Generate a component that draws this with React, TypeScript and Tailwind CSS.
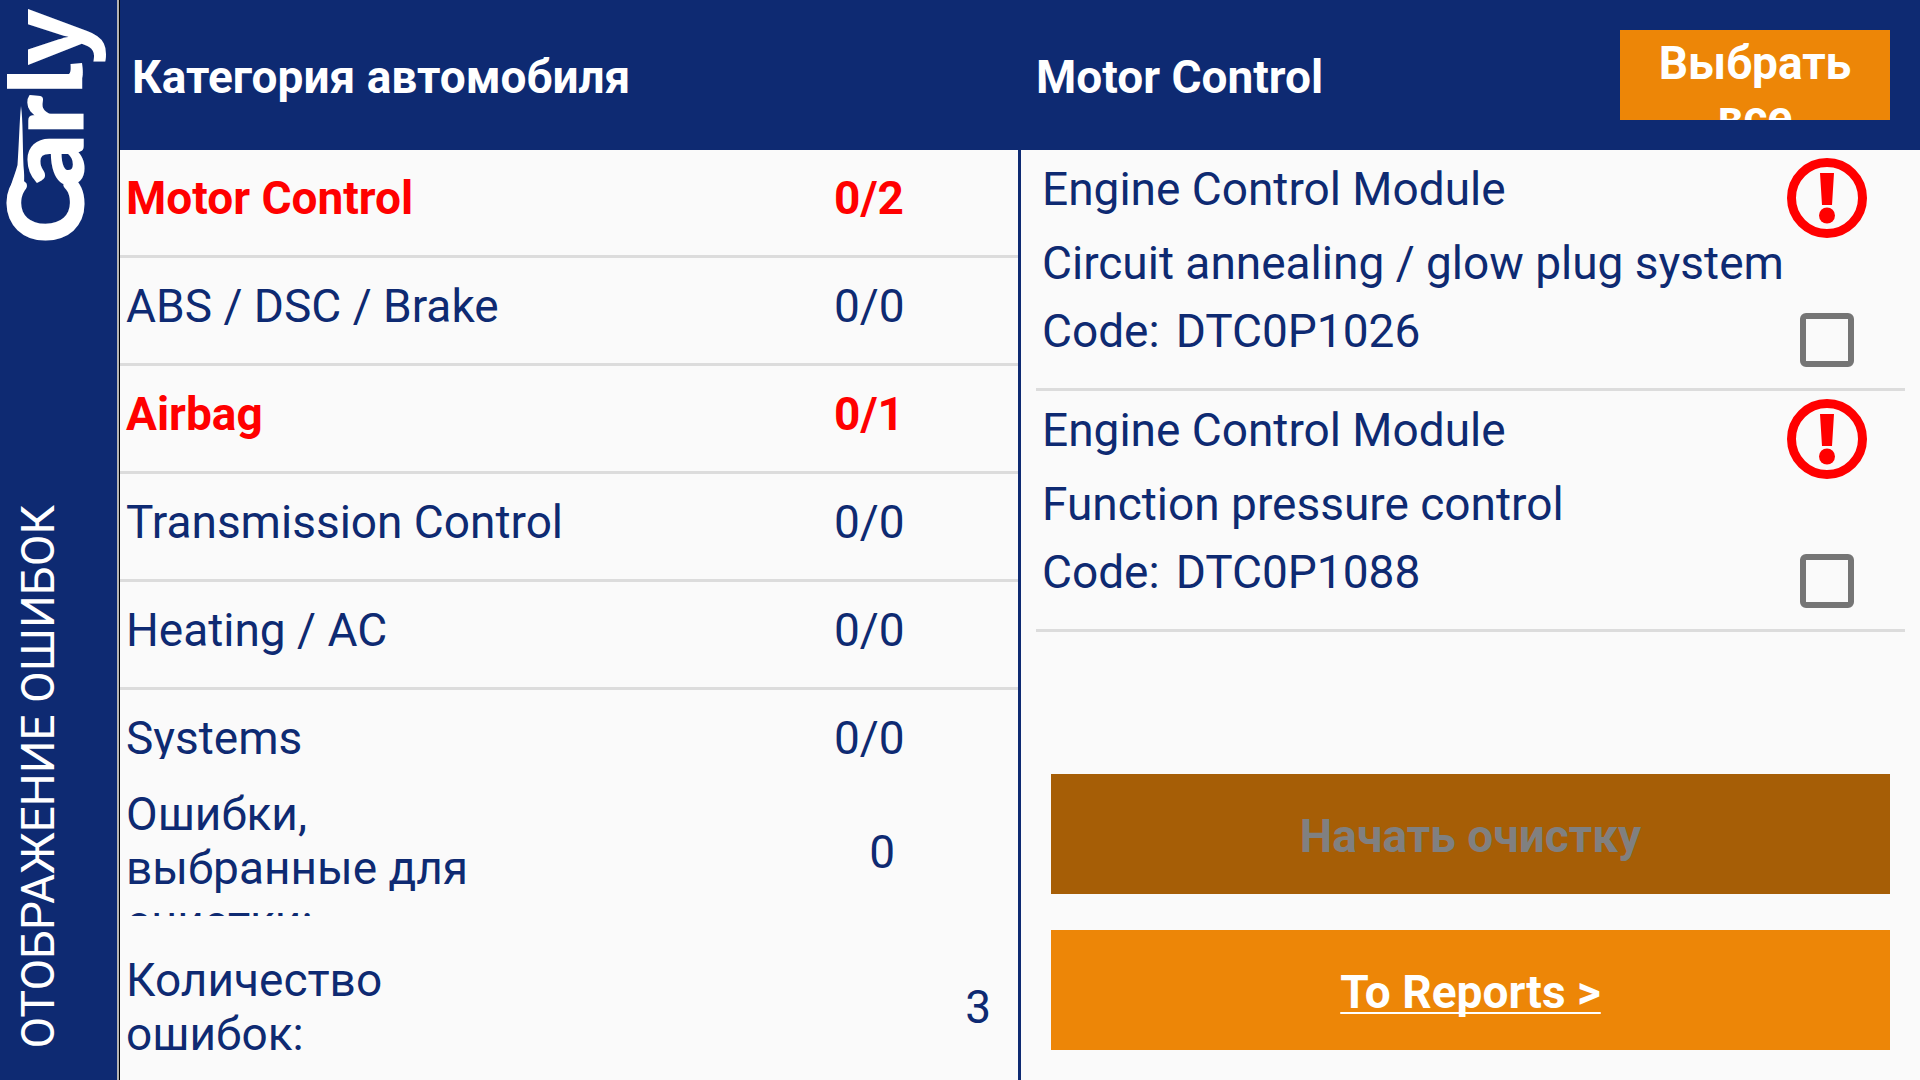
const categories = [
  { name: "Motor Control", count: "0/2", faulty: true },
  { name: "ABS / DSC / Brake", count: "0/0", faulty: false },
  { name: "Airbag", count: "0/1", faulty: true },
  { name: "Transmission Control", count: "0/0", faulty: false },
  { name: "Heating / AC", count: "0/0", faulty: false },
  { name: "Systems", count: "0/0", faulty: false },
];

const faults = [
  { module: "Engine Control Module", text: "Circuit annealing / glow plug system", code: "DTC0P1026" },
  { module: "Engine Control Module", text: "Function pressure control", code: "DTC0P1088" },
];

function Logo() {
  return (
    <svg viewBox="0 0 117 250" className="w-full shrink-0 fill-white" role="img" aria-label="Carly">
      <g transform="translate(82 240) rotate(-90)" fontWeight="700">
        <text y="0" fontFamily="Lato, sans-serif" fontSize="101" stroke="#ffffff" strokeWidth="3">
          <tspan x="-3">C</tspan>
          <tspan x="54">a</tspan>
          <tspan x="106">r</tspan>
        </text>
        <text y="0" fontFamily="'Noto Sans', sans-serif" fontSize="98">
          <tspan x="144">l</tspan>
          <tspan x="175">y</tspan>
        </text>
      </g>
      <path d="M7 206 C7 192 14 178 17.500 165 C19 145 19.500 120 21 106 C23 120 22.500 145 23.500 166 C25 180 24 188 21.500 194 C20 199 20 204 20 210 Z" />
      <path d="M62 76 C71 76 71 72 70.500 64 L82 63 C84 76 84 88 64 88 Z" />
    </svg>
  );
}

function WarningIcon() {
  return (
    <svg viewBox="0 0 80 80" className="size-20" role="img" aria-label="Warning">
      <circle cx="40" cy="40" r="35.500" fill="none" stroke="#ff0000" strokeWidth="9" />
      <path d="M33 15 H47 L45 47 H35 Z" fill="#ff0000" />
      <circle cx="40" cy="57.500" r="8" fill="#ff0000" />
    </svg>
  );
}

function Sidebar() {
  return (
    <aside className="flex w-[120px] shrink-0 flex-col justify-between border-r border-black bg-[#0e2a72]">
      <div className="flex h-full flex-col justify-between border-r-2 border-[#b4b4b4]">
        <Logo />
        <h1 className="mb-8 ml-[11px] w-[54px] rotate-180 whitespace-nowrap text-white [writing-mode:vertical-rl]">
          ОТОБРАЖЕНИЕ ОШИБОК
        </h1>
      </div>
    </aside>
  );
}

function CategoryPanel() {
  return (
    <section className="flex min-h-0 min-w-0 flex-col">
      <header className="flex h-[150px] shrink-0 items-center bg-[#0e2a72] px-3">
        <h2 className="pt-1 font-bold text-white">Категория автомобиля</h2>
      </header>
      <ul className="min-h-0 flex-1 overflow-hidden">
        {categories.map((c) => (
          <li key={c.name} className="border-b-3 border-[#dcdcdc]">
            <button
              type="button"
              className={
                c.faulty
                  ? "flex w-full pt-[21px] pb-[30px] pl-[6px] text-left font-bold text-[#ff0000]"
                  : "flex w-full pt-[21px] pb-[30px] pl-[6px] text-left"
              }
            >
              <span className="flex-1">{c.name}</span>
              <span className="w-[184px]">{c.count}</span>
            </button>
          </li>
        ))}
      </ul>
      <dl className="flex shrink-0 flex-col gap-[26px] pt-7 pb-[9px] pl-[6px]">
        <div className="flex h-[129px] justify-between overflow-hidden">
          <dt className="w-[356px]">Ошибки, выбранные для очистки:</dt>
          <dd className="self-center pr-[123px]">0</dd>
        </div>
        <div className="flex h-[129px] items-center justify-between">
          <dt className="w-[356px]">Количество ошибок:</dt>
          <dd className="pr-[27px]">3</dd>
        </div>
      </dl>
    </section>
  );
}

function FaultPanel() {
  return (
    <section className="flex min-h-0 min-w-0 flex-col">
      <header className="flex h-[150px] shrink-0 items-center justify-between bg-[#0e2a72] pr-[30px] pl-[15px] text-white">
        <h2 className="pt-1 font-bold">Motor Control</h2>
        <button
          type="button"
          className="flex h-[90px] w-[270px] items-start justify-center overflow-hidden bg-[#ed8607] px-6 pt-[6px] font-bold"
        >
          Выбрать все
        </button>
      </header>
      <ul className="min-h-0 flex-1 overflow-hidden px-[15px]">
        {faults.map((f) => (
          <li key={f.code} className="border-b-3 border-[#dcdcdc]">
            <label className="flex justify-between pl-[6px]">
              <span className="flex flex-col pt-3 pb-[30px] whitespace-nowrap">
                <span>{f.module}</span>
                <span className="mt-5">{f.text}</span>
                <span className="mt-[14px] flex gap-4">
                  <span>Code:</span>
                  <span>{f.code}</span>
                </span>
              </span>
              <span className="flex flex-col items-center justify-between pt-2 pr-[38px] pb-[21px]">
                <WarningIcon />
                <input
                  type="checkbox"
                  className="size-[54px] appearance-none rounded-md border-6 border-[#757575] checked:bg-[#757575]"
                />
              </span>
            </label>
          </li>
        ))}
      </ul>
      <div className="flex shrink-0 flex-col gap-9 px-[30px] pb-[30px]">
        <button type="button" disabled className="h-[120px] bg-[#a65e06] pt-1 font-bold text-[#808080]">
          Начать очистку
        </button>
        <button
          type="button"
          className="h-[120px] bg-[#ed8607] pt-1 font-bold text-white underline decoration-2 underline-offset-4 [text-decoration-skip-ink:none]"
        >
          To Reports &gt;
        </button>
      </div>
    </section>
  );
}

export default function App() {
  return (
    <div className="flex h-screen bg-[#fafafa] font-[Roboto,sans-serif] text-[46px] leading-[54px] text-[#0e2a72]">
      <Sidebar />
      <main className="grid min-w-0 flex-1 grid-cols-[898fr_3px_899fr] grid-rows-[minmax(0,1fr)]">
        <CategoryPanel />
        <div className="bg-[#0e2a72]" />
        <FaultPanel />
      </main>
    </div>
  );
}
